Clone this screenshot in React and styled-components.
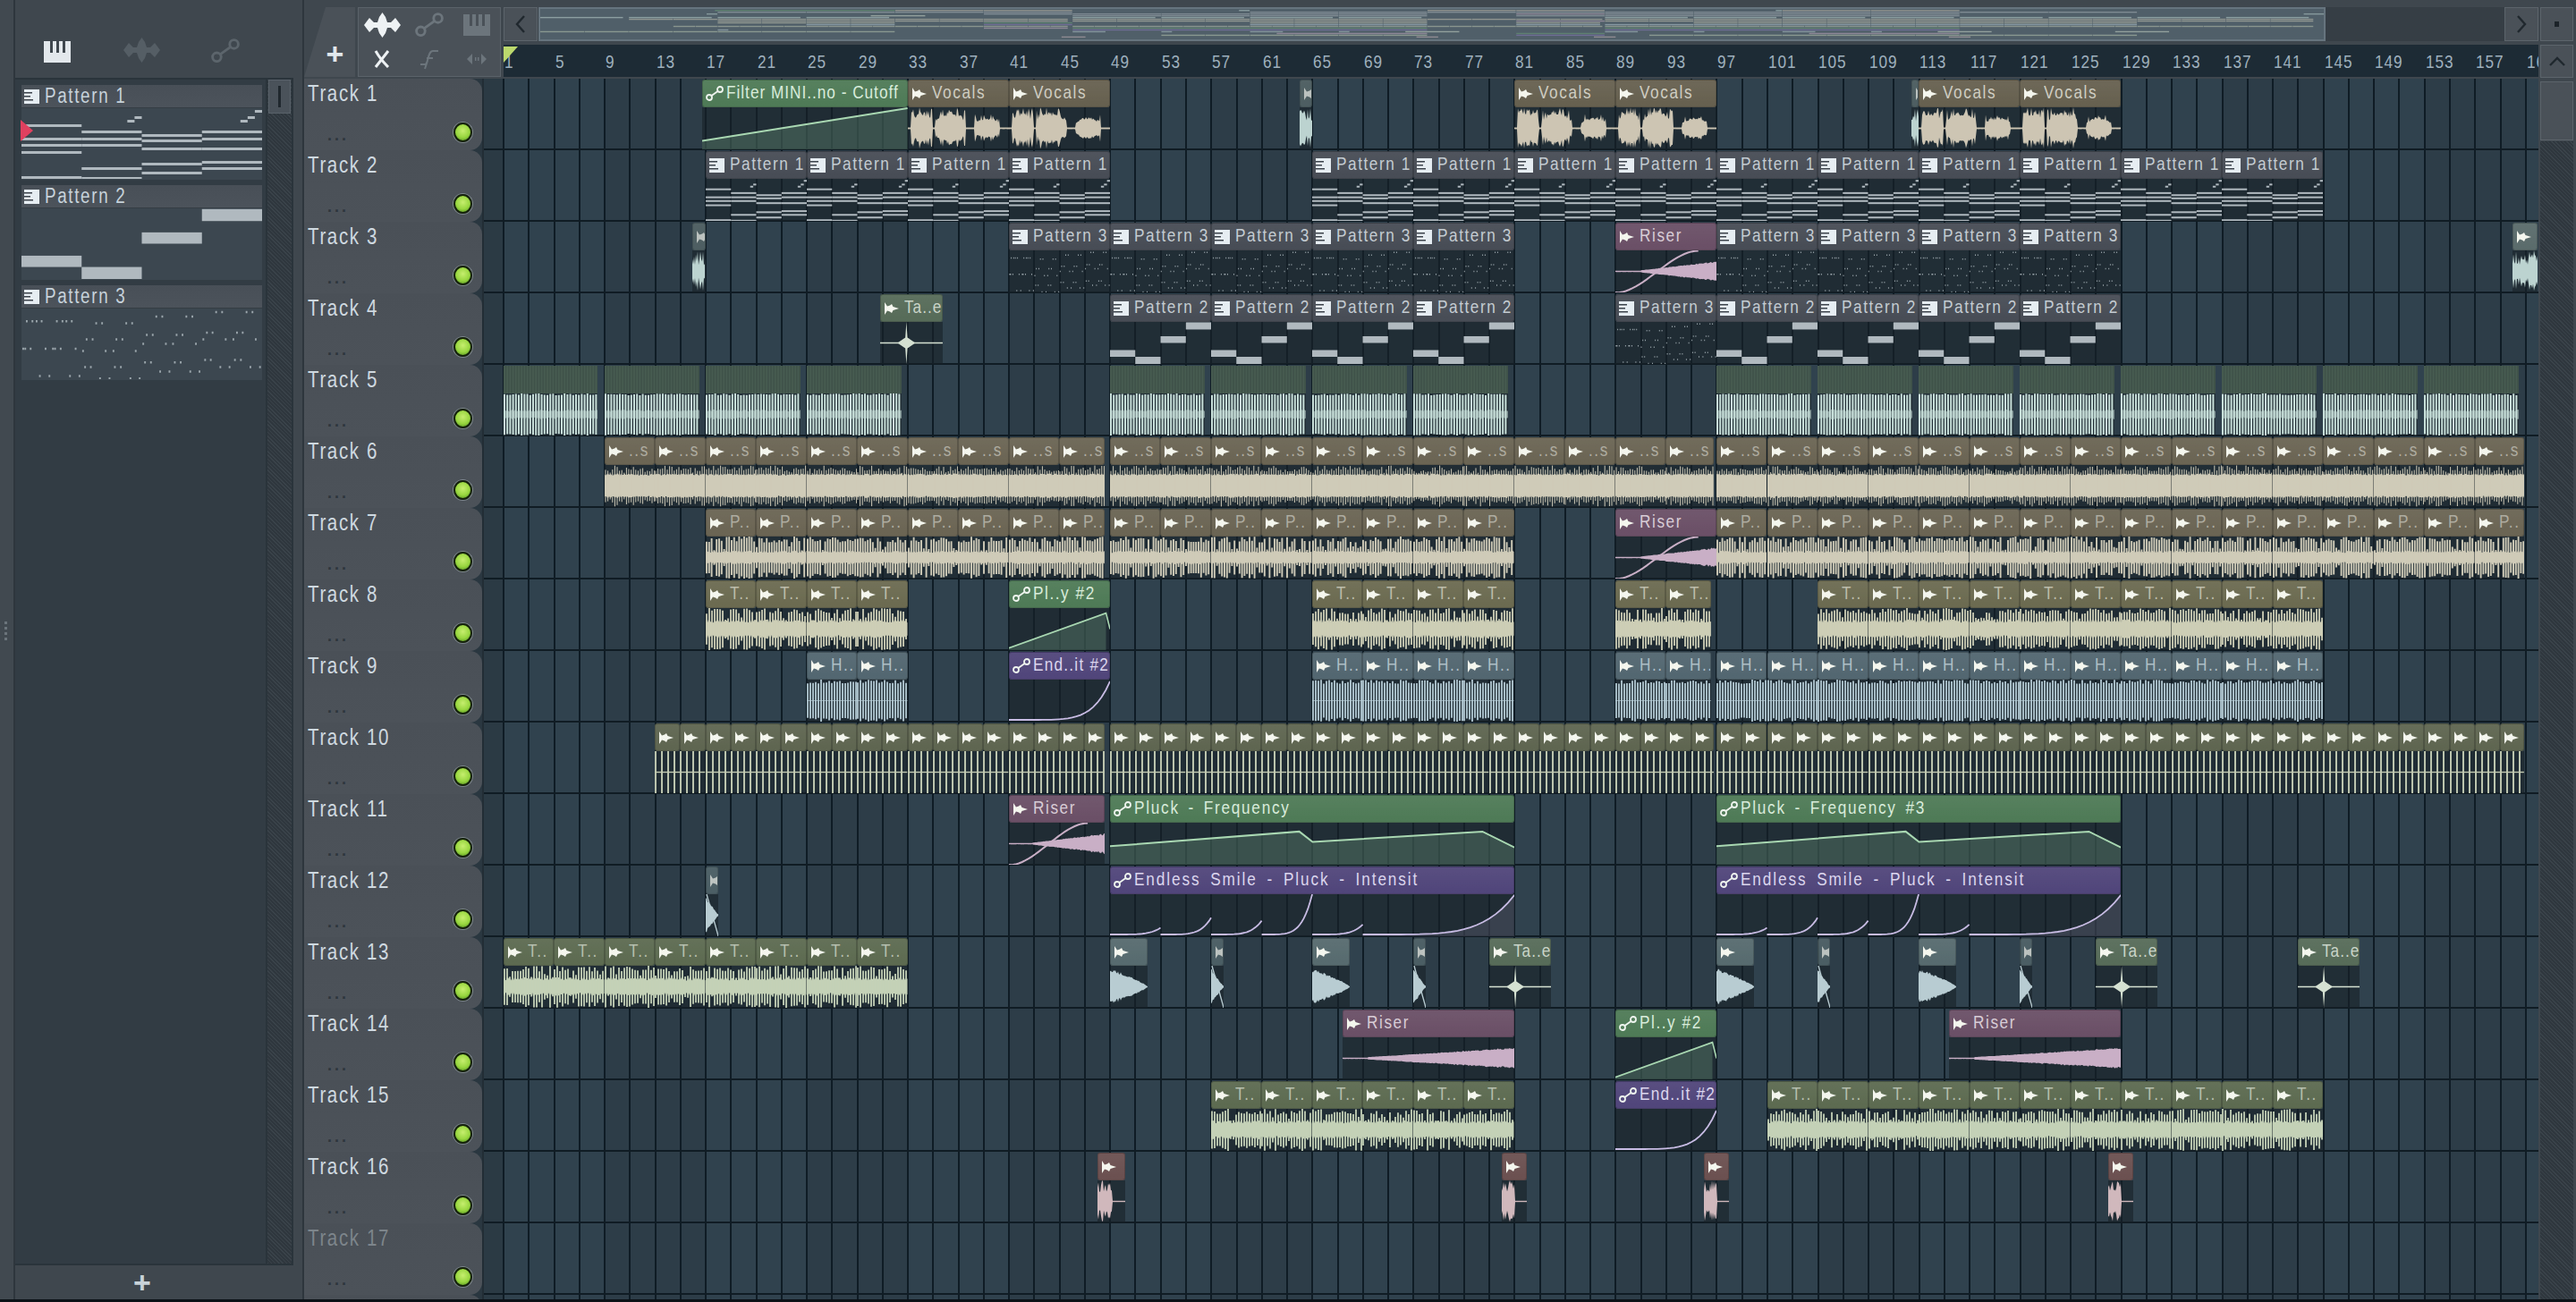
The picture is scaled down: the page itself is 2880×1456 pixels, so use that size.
import React from "react";
import styled, { createGlobalStyle } from "styled-components";

const BAR = 14.13;
const GRID_X = 21.5;
const FONT = `"Liberation Sans",Arial,sans-serif`;

const Global = createGlobalStyle`
  html,body{margin:0;padding:0;background:#0b1116;}
  #root{width:2880px;height:1456px;overflow:hidden;}
  *{box-sizing:border-box;}
`;

/* ---------- helpers for the wave drawings ---------- */
function rng(seed) {
  let a = seed * 2654435761 >>> 0;
  return () => {
    a |= 0; a = (a + 0x6d2b79f5) | 0;
    let t = Math.imul(a ^ (a >>> 15), 1 | a);
    t = (t + Math.imul(t ^ (t >>> 7), 61 | t)) ^ t;
    return ((t ^ (t >>> 14)) >>> 0) / 4294967296;
  };
}
const n = (v) => Math.round(v * 10) / 10;
function mirror(w, h, amp, seed, step = 1) {
  const r = rng(seed), c = h / 2, top = [], bot = [];
  const count = Math.ceil(w / step);
  for (let i = 0; i <= count; i++) {
    const x = Math.min(w, i * step);
    const a = Math.min(1, amp(x / w, r)) * c;
    const b = a * (0.9 + r() * 0.1);
    top.push(`${n(x)} ${n(c - a)}`);
    bot.unshift(`${n(x)} ${n(c + b)}`);
  }
  return `M${top.join("L")}L${bot.join("L")}Z`;
}
function comb(w, h, pitch, amp, seed) {
  const r = rng(seed), c = h / 2;
  let d = "";
  for (let x = 1; x < w; x += pitch) {
    const a = Math.min(1, amp(x / w, r)) * c;
    d += `M${n(x)} ${n(c - a)}V${n(c + a)}`;
  }
  return d;
}

const NOTES1 = [
  [0, .25, 139], [0, .25, 154], [0, .25, 161], [0, .25, 169], [0, .25, 197],
  [.25, .5, 146], [.25, .5, 154], [.25, .5, 161], [.25, .5, 187], [.25, .5, 198],
  [.44, .47, 134], [.47, .5, 130],
  [.5, .75, 150], [.5, .75, 156], [.5, .75, 165], [.5, .75, 182], [.5, .75, 192],
  [.75, 1, 146], [.75, 1, 154], [.75, 1, 165], [.75, 1, 180], [.75, 1, 187],
  [.91, .94, 134], [.94, .97, 130], [.97, 1, 123],
];
const NOTES2 = [[0, .25, .67, .83], [.25, .5, .83, 1], [.5, .75, .34, .5], [.75, 1, .01, .18]];
const DOT_ROWS = [
  [143, 723, 743, 825, 845], [158, 522, 542, 623, 643], [174, 87, 106, 120, 137, 188, 207, 220, 238],
  [181, 320, 340, 421, 441], [212, 692, 711, 793, 812], [220, 490, 510, 590, 610],
  [235, 288, 308, 388, 408, 680, 755, 781, 856], [250, 478, 554, 578, 655],
  [266, 75, 82, 100, 150, 175, 182, 201, 251], [274, 276, 352, 378, 453], [304, 686, 705, 786, 806],
  [312, 484, 504, 584, 604], [328, 283, 302, 383, 403, 737, 768, 838, 870], [343, 535, 566, 636, 667],
  [358, 131, 163, 232, 264], [366, 333, 365, 435, 466],
];

function PatternDrawing({ which, w, h, bar = 2 }) {
  let els = null;
  if (which === 1) {
    els = NOTES1.map(([a, b, y], i) => (
      <rect key={i} x={a * w} y={((y - 121) / 79) * h} width={(b - a) * w} height={bar} fill="#b0b9bf" />
    ));
  } else if (which === 2) {
    els = NOTES2.map(([a, b, y0, y1], i) => (
      <rect key={i} x={a * w} y={y0 * h} width={(b - a) * w} height={(y1 - y0) * h} fill="#b0b9bf" />
    ));
  } else {
    let d = "";
    const dw = Math.max(1, w / 140), dh = Math.max(1, h / 32);
    DOT_ROWS.forEach(([y, ...xs]) => xs.forEach((x) => {
      d += `M${n(((x - 72) / 808) * w)} ${n(((y - 135) / 237) * h)}h${n(dw)}v${n(dh)}h-${n(dw)}z`;
    }));
    els = <path d={d} fill="#9aa5ab" />;
  }
  return <Drawing width={w} height={h}>{els}</Drawing>;
}

function BandComb({ w, h, color, seed, pitch, low, spread, top, sw, chance = 0.8 }) {
  return (
    <Drawing width={w} height={h}>
      <path d={mirror(w, h, (t, r) => low + r() * spread, seed)} fill={color} />
      <path
        d={comb(w, h, pitch, (t, r) => (r() < chance ? top - r() * 0.28 : low + 0.12 + r() * 0.2), seed + 3)}
        stroke={color} strokeWidth={sw} fill="none"
      />
    </Drawing>
  );
}

function WaveDrawing({ kind, w, h, color, line, fill, seed }) {
  const c = h / 2;
  const cl = <path d={`M0 ${c}H${w}`} stroke={color} strokeWidth="1.4" fill="none" />;
  switch (kind) {
    case "vocal": {
      const blobs = [[.03, .24, 1, .75], [.27, .57, 1, .45], [.66, .91, .68, .25]];
      const amp = (t, r) => {
        for (const [a, b, m, sp] of blobs) if (t >= a && t <= b) {
          const p = (t - a) / (b - a);
          const body = m * (0.5 + 0.4 * Math.sin(p * Math.PI));
          return r() < sp ? m * (0.6 + r() * 0.4) : body * (0.65 + r() * 0.25);
        }
        return 0.03;
      };
      return <Drawing width={w} height={h}><path d={mirror(w, h, amp, seed)} fill={color} />{cl}</Drawing>;
    }
    case "dense":
      return <BandComb w={w} h={h} color={color} seed={seed} pitch={2.6} low={0.5} spread={0.1} top={0.98} sw={1} chance={0.7} />;
    case "busy":
      return <BandComb w={w} h={h} color={color} seed={seed} pitch={3} low={0.3} spread={0.16} top={1} sw={1.8} />;
    case "striped":
      return <BandComb w={w} h={h} color={color} seed={seed} pitch={2.8} low={0.22} spread={0.12} top={1} sw={1.9} chance={0.85} />;
    case "comb":
      return (
        <Drawing width={w} height={h}>
          <path d={comb(w, h, 3.2, (t, r) => 0.92 + r() * 0.08, seed)} stroke={color} strokeWidth="2" fill="none" />
          <path d={mirror(w, h, (t, r) => 0.14 + r() * 0.1, seed + 1)} fill={color} opacity={0.55} />
        </Drawing>
      );
    case "hat":
      return (
        <Drawing width={w} height={h}>
          <path d={comb(w, h, 3, (t, r) => 0.8 + r() * 0.2, seed)} stroke={color} strokeWidth="1.7" fill="none" />
          <path d={`M0 ${c}H${w}`} stroke={color} strokeWidth="1" opacity={0.6} fill="none" />
        </Drawing>
      );
    case "kick":
      return (
        <Drawing width={w} height={h}>
          <path d={comb(w, h, 7, () => 1, seed)} stroke={color} strokeWidth="1.9" fill="none" />
          {cl}
        </Drawing>
      );
    case "rise":
      return (
        <Drawing width={w} height={h}>
          <path d={mirror(w, h, (t, r) => (t < 0.15 ? 0.03 : 0.06 + 0.44 * ((t - 0.15) / 0.85) * (0.86 + r() * 0.18)), seed)} fill={color} />
        </Drawing>
      );
    case "riserS": {
      let s = `M0 ${h}`;
      for (let i = 1; i <= 24; i++) {
        const t = i / 24, e = t * t * (3 - 2 * t);
        s += `L${n(t * w * 0.82)} ${n(h - e * h + 0.5)}`;
      }
      return (
        <Drawing width={w} height={h}>
          <path d={mirror(w, h, (t, r) => (t < 0.25 ? 0.03 : 0.05 + 0.42 * ((t - 0.25) / 0.75) * (0.85 + r() * 0.2)), seed)} fill={color} />
          <path d={s} stroke={color} strokeWidth="2" fill="none" />
        </Drawing>
      );
    }
    case "star": {
      const x = w * 0.42;
      return (
        <Drawing width={w} height={h}>
          {cl}
          <path d={`M${x} 0L${x + 1.2} ${c - 6}L${x + 10} ${c}L${x + 1.2} ${c + 6}L${x} ${h}L${x - 1.2} ${c + 6}L${x - 10} ${c}L${x - 1.2} ${c - 6}Z`} fill={color} />
        </Drawing>
      );
    }
    case "impact":
      return (
        <Drawing width={w} height={h}>
          <path d={mirror(w, h, (t, r) => Math.max(0.02, Math.pow(1 - t, 0.8) * (0.72 + r() * 0.18) * Math.min(1, 0.85 + t * 3)), seed)} fill={color} />
        </Drawing>
      );
    case "tiny":
      return (
        <Drawing width={w} height={h}>
          <path d={mirror(w, h, (t, r) => Math.max(0.05, (1 - t) * 0.9 * (0.8 + r() * 0.2)), seed)} fill={color} />
          <path d={`M1 0L${w} ${h}`} stroke={color} strokeWidth="1.4" fill="none" />
        </Drawing>
      );
    case "short":
      return (
        <Drawing width={w} height={h}>
          <path d={mirror(w, h, (t, r) => (t < 0.52 ? 0.45 + r() * 0.55 : 0.02), seed)} fill={color} />
          <path d={`M${w / 2} ${c}H${w}`} stroke={color} strokeWidth="1.4" fill="none" />
        </Drawing>
      );
    case "chunk":
      return <Drawing width={w} height={h}><path d={mirror(w, h, (t, r) => 0.3 + r() * 0.7, seed)} fill={color} /></Drawing>;
    case "ramp":
      return (
        <Drawing width={w} height={h}>
          <path d={`M0 ${h * 0.8}L${w} 1V${h}H0Z`} fill={fill} />
          <path d={`M0 ${h * 0.8}L${w} 1`} stroke={line} strokeWidth="2" fill="none" />
        </Drawing>
      );
    case "shortRamp":
      return (
        <Drawing width={w} height={h}>
          <path d={`M0 ${h * 0.95}L${w * 0.96} ${h * 0.12}V${h}H0Z`} fill={fill} />
          <path d={`M0 ${h * 0.95}L${w * 0.96} ${h * 0.12}L${w} ${h * 0.5}`} stroke={line} strokeWidth="1.6" fill="none" />
        </Drawing>
      );
    case "freq": {
      const p = [[0, .56], [.468, .21], [.501, .46], [.921, .21], [1, .59]].map(([a, b]) => `${n(a * w)} ${n(b * h)}`).join("L");
      return (
        <Drawing width={w} height={h}>
          <path d={`M${p}V${h}H0Z`} fill={fill} />
          <path d={`M${p}`} stroke={line} strokeWidth="2" fill="none" />
        </Drawing>
      );
    }
    case "smile": {
      const segs = [[0, .125, .8], [.125, .25, .56], [.25, .375, .63], [.375, .5, 0], [.5, .625, .72], [.625, 1, .02]];
      let d = "";
      let area = "";
      segs.forEach(([a, b, pk], si) => {
        let s = "";
        for (let i = 0; i <= 24; i++) {
          const t = i / 24;
          const e = Math.pow(t, 5);
          s += `${i ? "L" : "M"}${n((a + (b - a) * t) * w)} ${n(h - 2 - (h - 2 - pk * h) * e)}`;
        }
        d += s;
        if (si === 5) area = `${s}V${h}H${n(a * w)}Z`;
      });
      return (
        <Drawing width={w} height={h}>
          <path d={area} fill={fill} />
          <path d={d} stroke={line} strokeWidth="1.8" fill="none" />
        </Drawing>
      );
    }
    case "endit": {
      let s = "";
      for (let i = 0; i <= 24; i++) {
        const t = i / 24;
        s += `${i ? "L" : "M"}${n(t * w)} ${n(h - 2 - (h - 4) * Math.pow(t, 6))}`;
      }
      return <Drawing width={w} height={h}><path d={s} stroke={line} strokeWidth="1.8" fill="none" /></Drawing>;
    }
    default:
      return null;
  }
}

/* ---------- small icons ---------- */
const SampleIcon = () => (
  <IconSvg width="17" height="14" viewBox="0 0 17 14">
    <path d="M1 0L4 4.5L7 3.6L9 2L10.5 5L17 7L10.5 9L9 12L7 10.4L4 9.5L1 14Z" fill="#f4f6ee" />
  </IconSvg>
);
const PatternIcon = () => (
  <IconSvg width="17" height="16" viewBox="0 0 17 16">
    <rect width="17" height="16" fill="#e6edf2" />
    <path d="M0 3h9v1.6H0zM0 7h7v1.6H0zM0 11h10v1.6H0z" fill="#3b424a" />
  </IconSvg>
);
const AutoIcon = ({ color = "#eef4ee", s = 20 }) => (
  <IconSvg width={s} height={s * 0.85} viewBox="0 0 20 17">
    <circle cx="4" cy="13" r="3" stroke={color} strokeWidth="1.8" fill="none" />
    <circle cx="16" cy="4" r="3" stroke={color} strokeWidth="1.8" fill="none" />
    <path d="M6.5 11L13.5 6" stroke={color} strokeWidth="1.8" />
  </IconSvg>
);
const PianoIcon = ({ color, dark = "#3f474e" }) => (
  <svg width="30" height="24" viewBox="0 0 30 24">
    <rect width="30" height="24" fill={color} />
    <path d="M7 0h3v13H7zM14 0h3v13h-3zM21 0h3v13h-3z" fill={dark} />
  </svg>
);
const WaveIcon = ({ color }) => (
  <svg width="41" height="28" viewBox="0 0 41 28">
    <path d="M0 14L6 6L11 11L15 11L17 5L20.5 0L24 5L26 11L30 11L35 6L41 14L35 22L30 17L26 17L24 23L20.5 28L17 23L15 17L11 17L6 22Z" fill={color} />
  </svg>
);

/* ---------- clip data ---------- */
const CL = {
  auto: { head: "#4e7a56", line: "#a9d8b2", fill: "rgba(120,170,135,.3)", text: "#d9ecdb", color: "#6ea37a" },
  purple: { head: "#50457a", line: "#c8bce4", fill: "rgba(170,160,200,.18)", text: "#dcd6ee", color: "#8d7cc4" },
  vocal: { head: "#66604f", color: "#cdc5b3", text: "#cfcdc2" },
  pat: { head: "#474c55", color: "#aeb7bd", text: "#c4ccd2" },
  riser: { head: "#6a4f66", color: "#c9afc6", text: "#d8ccd6" },
  teal: { head: "#526670", color: "#bdd4de", text: "#aebec5" },
  olive: { head: "#6a6453", color: "#cfcbb8", text: "#aeaca0" },
  t8: { head: "#6b6a50", color: "#cdceb6", text: "#bdbdab" },
  t10: { head: "#5e6550", color: "#c4ccb4", text: "#c8cfb8" },
  t13: { head: "#5c6a50", color: "#c4d1b7", text: "#b6bfae" },
  tae: { head: "#566b58", color: "#d5e1d2", text: "#c9d4c8" },
  imp: { head: "#566a6e", color: "#b8ccd2", text: "#c4d0d4" },
  mini: { head: "#5a6b6b", color: "#bcd3d0", text: "#c4d0d4" },
  rust: { head: "#6b5050", color: "#d0b8bc", text: "#c9b8b8" },
  t5: { head: "#3f5249", color: "#c8e0da", text: "#b3d1ca" },
};

const seq = (a, b, step, o) => {
  const out = [];
  for (let x = a; x < b - 0.01; x += step) out.push({ a: x, b: Math.min(b, x + step), ...o });
  return out;
};
const P1 = { icon: "p", pat: 1, name: "Pattern 1", c: "pat" };
const P2 = { icon: "p", pat: 2, name: "Pattern 2", c: "pat" };
const P3 = { icon: "p", pat: 3, name: "Pattern 3", c: "pat" };
const V = { icon: "s", name: "Vocals", c: "vocal", kind: "vocal" };
const R1 = { icon: "s", name: "Riser", c: "riser", kind: "riserS" };
const R2 = { icon: "s", name: "Riser", c: "riser", kind: "rise" };
const TAE = { icon: "s", name: "Ta..e", c: "tae", kind: "star", ls: 1.2 };
const IMP = { icon: "s", name: "", c: "imp", kind: "impact" };
const TIN = { icon: "s", name: "", c: "imp", kind: "tiny", faint: true };
const PLY = { icon: "a", name: "Pl..y #2", c: "auto", kind: "shortRamp" };
const END = { icon: "a", name: "End..it #2", c: "purple", kind: "endit", ls: 1.5 };

const S6 = { icon: "s", name: "..s", c: "olive", kind: "dense" };
const S7 = { icon: "s", name: "P..", c: "olive", kind: "striped" };
const S8 = { icon: "s", name: "T..", c: "t8", kind: "busy" };
const S9 = { icon: "s", name: "H..", c: "teal", kind: "hat" };
const S10 = { icon: "s", name: "", c: "t10", kind: "kick" };
const S13 = { icon: "s", name: "T..", c: "t13", kind: "busy" };
const S15 = { icon: "s", name: "T..", c: "t13", kind: "busy" };
const S5 = { c: "t5", kind: "comb", stripes: true };
const RUST = { icon: "s", name: "", c: "rust", kind: "short" };

const TRACKS = [
  [
    { a: 16.75, b: 33, icon: "a", name: "Filter MINI..no - Cutoff", c: "auto", kind: "ramp", ls: 1.2, ws: 0 },
    { a: 33, b: 41, ...V }, { a: 41, b: 49, ...V },
    { a: 64, b: 65, icon: "s", name: "", c: "mini", kind: "chunk", faint: true },
    { a: 81, b: 89, ...V }, { a: 89, b: 97, ...V },
    { a: 112.4, b: 113, icon: "s", name: "", c: "mini", kind: "chunk", faint: true },
    { a: 113, b: 121, ...V }, { a: 121, b: 129, ...V },
  ],
  [...seq(17, 49, 8, P1), ...seq(65, 145, 8, P1)],
  [
    { a: 16, b: 17, icon: "s", name: "", c: "mini", kind: "chunk", faint: true },
    ...seq(41, 81, 8, P3), { a: 89, b: 97, ...R1 }, ...seq(97, 129, 8, P3),
    { a: 160, b: 162, icon: "s", name: "", c: "mini", kind: "chunk" },
  ],
  [
    { a: 30.8, b: 35.75, ...TAE }, ...seq(49, 81, 8, P2), { a: 89, b: 97, ...P3 }, ...seq(97, 129, 8, P2),
  ],
  [...seq(1, 33, 8, S5), ...seq(49, 81, 8, S5), ...seq(97, 129, 8, S5), ...seq(129, 161, 8, S5)].map((c) => ({ ...c, b: c.b - 0.5 })),
  [...seq(9, 48.6, 4, S6), ...seq(49, 96.8, 4, S6), ...seq(97, 160.9, 4, S6)],
  [...seq(17, 48.6, 4, S7), ...seq(49, 81, 4, S7), { a: 89, b: 97, ...R1 }, ...seq(97, 160.9, 4, S7)],
  [...seq(17, 33, 4, S8), { a: 41, b: 49, ...PLY }, ...seq(65, 81, 4, S8), ...seq(89, 96.6, 4, S8), ...seq(105, 145, 4, S8)],
  [...seq(25, 33, 4, S9), { a: 41, b: 49, ...END }, ...seq(65, 81, 4, S9), ...seq(89, 96.6, 4, S9), ...seq(97, 145, 4, S9)],
  [...seq(13, 48.6, 2, S10), ...seq(49, 96.8, 2, S10), ...seq(97, 160.9, 2, S10)],
  [
    { a: 41, b: 48.6, ...R1 },
    { a: 49, b: 81, icon: "a", name: "Pluck - Frequency", c: "auto", kind: "freq", ls: 2.1, ws: 4 },
    { a: 97, b: 129, icon: "a", name: "Pluck - Frequency #3", c: "auto", kind: "freq", ls: 2.1, ws: 4 },
  ],
  [
    { a: 17, b: 18, ...TIN },
    { a: 49, b: 81, icon: "a", name: "Endless Smile - Pluck - Intensit", c: "purple", kind: "smile", ls: 2.3, ws: 5 },
    { a: 97, b: 129, icon: "a", name: "Endless Smile - Pluck - Intensit", c: "purple", kind: "smile", ls: 2.3, ws: 5 },
  ],
  [
    ...seq(1, 33, 4, S13),
    { a: 49, b: 52, ...IMP }, { a: 57, b: 58, ...TIN }, { a: 65, b: 68, ...IMP }, { a: 73, b: 74, ...TIN },
    { a: 79, b: 83.9, ...TAE },
    { a: 97, b: 100, ...IMP }, { a: 105, b: 106, ...TIN }, { a: 113, b: 116, ...IMP }, { a: 121, b: 122, ...TIN },
    { a: 127, b: 131.9, ...TAE }, { a: 143, b: 147.9, ...TAE },
  ],
  [{ a: 67.4, b: 81, ...R2 }, { a: 89, b: 97, ...PLY }, { a: 115.4, b: 129, ...R2 }],
  [...seq(57, 81, 4, S15), { a: 89, b: 97, ...END }, ...seq(101, 145, 4, S15)],
  [
    { a: 48, b: 50.2, ...RUST }, { a: 80, b: 82, ...RUST }, { a: 96, b: 98, ...RUST }, { a: 128, b: 130, ...RUST },
  ],
  [],
  [],
];

/* ---------- layout ---------- */
const Page = styled.div`
  width: 2880px; height: 1456px; display: flex; flex-direction: column;
  background: #3f474e; font-family: ${FONT}; overflow: hidden;
`;
const Work = styled.div`flex: 1; min-height: 0; display: flex;`;
const BottomEdge = styled.div`height: 3px; background: #0b1116;`;
const Rail = styled.div`
  width: 17px; display: flex; flex-direction: column; align-items: center; justify-content: center; gap: 3px;
  border-right: 2px solid #2e363d; padding-bottom: 42px; padding-right: 2px; background: #414950;
`;
const GripDot = styled.span`width: 3px; height: 3px; background: #6b747b;`;
const Squeeze = styled.span`
  display: inline-block; flex: none; transform: scaleX(0.82); transform-origin: 0 50%; white-space: nowrap;
`;
const ClipLabel = styled(Squeeze)`
  margin-bottom: 4px;
  letter-spacing: ${(p) => (p.$ls == null ? "1.9px" : `${p.$ls}px`)};
  word-spacing: ${(p) => p.$ws || 0}px;
`;
const Picker = styled.div`width: 321px; display: flex; flex-direction: column;`;
const PickerTools = styled.div`
  height: 87px; display: grid; grid-template-columns: 94px 94px 94px; align-items: end; justify-items: center;
  padding-bottom: 17px;
`;
const PickerPanel = styled.div`
  width: 311px; flex: 1; display: flex; background: #323c44; border: 2px solid #2a343b; border-left: 0;
`;
const PickerList = styled.div`flex: 1; padding: 6px 4px 0 7px; display: flex; flex-direction: column; gap: 6px;`;
const PickerItem = styled.div`display: flex; flex-direction: column; height: 106px;`;
const PickerHead = styled.div`
  height: 26px; display: flex; align-items: center; gap: 6px; padding-left: 3px; flex: none; overflow: hidden;
  background: linear-gradient(#484f57, #4c535b); border-bottom: 1px solid #353d44;
  font-size: 23px; letter-spacing: 2px; color: #c6d2da; line-height: 1;
`;
const PickerPreview = styled.div`flex: 1; background: #3c4750; display: flex;`;
const Hatch = styled.div`
  background: repeating-linear-gradient(45deg, #3a434a 0 1px, #2f373e 1px 3px);
`;
const PickerScroll = styled(Hatch)`width: 31px; border-left: 2px solid #2a343b;`;
const SmallBtn = styled.div`
  height: 38px; margin: 0 1px; background: #4a525a; border: 1px solid #59626a; display: flex; justify-content: center; align-items: center;
`;
const Bar = styled.span`width: 3px; height: 24px; background: #20282e;`;
const PickerFooter = styled.div`
  height: 38px; width: 284px; display: flex; align-items: center; justify-content: center; font-size: 34px; font-weight: 700; color: #c8d2d8;
  line-height: 1;
`;
const Marker = styled.span`
  position: absolute; left: -1px; top: 13px; width: 14px; height: 24px; background: #e0405f;
  clip-path: polygon(0 0, 100% 50%, 0 100%);
`;
const PreviewWrap = styled.div`position: relative; flex: none;`;

const Arr = styled.div`
  width: 2500px; display: flex; flex-direction: column; border-left: 2px solid #2e363d;
`;
const ArrTop = styled.div`height: 88px; display: flex; padding-top: 8px;`;
const AddTab = styled.div`
  width: 57px; height: 78px; margin-right: 3px; background: #4a5158;
  clip-path: polygon(24px 0, 100% 0, 100% 100%, 0 100%);
  display: flex; align-items: center; justify-content: center; padding: 26px 0 0 12px;
  font: 700 34px "Liberation Sans", sans-serif; color: #e2e8ec;
`;
const Tools = styled.div`
  width: 160px; height: 78px; background: #4a5158; border: 1px solid #5a6269; display: grid;
  grid-template-columns: 1fr 1fr 1fr; grid-template-rows: 1fr 1fr; align-items: center; justify-items: center; margin-right: 3px;
`;
const TimeCol = styled.div`flex: 1; display: flex; flex-direction: column; gap: 4px; min-width: 0; position: relative;`;
const OverviewBar = styled.div`height: 38px; display: flex; gap: 1px; background: #363e45;`;
const NavBtn = styled.div`
  width: 38px; flex: none; background: #4a5158; border: 1px solid #5c646b; display: flex; align-items: center; justify-content: center;
`;
const OverviewTrack = styled.div`flex: 1; min-width: 0;`;
const OverviewFill = styled.div`
  width: 1998px; height: 38px; background: #505f69; border: 2px solid #66747e; overflow: hidden;
`;
const Ruler = styled.div`
  height: 36px; background: #1d2b35; display: flex; overflow: hidden; position: relative; align-items: center;
`;
const BarLabel = styled.div`
  flex: none; width: ${BAR * 4}px; padding-left: 1px; font-size: 21px; letter-spacing: 1.2px; color: #9fb0bd; line-height: 1;
`;
const Playhead = styled.span`
  position: absolute; left: 0; top: 2px; width: 16px; height: 18px; background: #bcd96d;
  clip-path: polygon(0 0, 100% 0, 0 100%);
`;
const ArrBody = styled.div`flex: 1; min-height: 0; display: flex;`;
const Heads = styled.div`width: 201px; flex: none; background: #2a3740; border-right: 2px solid #222d35; overflow: hidden;`;
const TrackHead = styled.div`
  height: 80px; position: relative; background: linear-gradient(#4a5057, #4c5259);
  border-radius: 0 14px 14px 0; padding: 1px 0 0 4px;
  font-size: 25px; letter-spacing: 2px; line-height: 30px;
  color: ${(p) => (p.$muted ? "#7d858b" : "#cfd9e0")};
`;
const Dots = styled.span`
  position: absolute; left: 26px; bottom: 8px; font-size: 18px; font-weight: 700; letter-spacing: 3px; color: #2e363d; line-height: 1;
`;
const Led = styled.span`
  position: absolute; right: 11px; top: 49px; width: 21px; height: 22px; border-radius: 50%;
  background: radial-gradient(circle at 50% 40%, #c6ee6e 0, #98d63f 55%, #6aa82a 80%);
  border: 2px solid #16230c; box-shadow: 0 0 0 1px #7c858c;
`;
const LanesArea = styled.div`
  flex: 1; min-width: 0; position: relative; overflow: hidden; background: #2b3a44;
`;
const GridLayer = styled.div`
  position: absolute; left: ${GRID_X - 1}px; top: 0; bottom: 0; right: 0;
  background:
    repeating-linear-gradient(90deg, #0f1c25 0 2px, transparent 2px ${BAR * 2}px),
    repeating-linear-gradient(90deg, #30424e 0 ${BAR * 8}px, #2d3d48 ${BAR * 8}px ${BAR * 16}px);
`;
const Lane = styled.div`
  height: 80px; position: relative; border-bottom: 2px solid #101c24;
`;
const Clip = styled.div.attrs((p) => ({ style: { left: p.$x, width: p.$w } }))`
  position: absolute; top: 0; height: 79px; display: flex; flex-direction: column; overflow: hidden;
`;
const ClipHead = styled.div`
  height: 31px; flex: none; margin-top: 1px; display: flex; align-items: center; gap: ${(p) => (p.$auto ? 3 : 6)}px; padding-left: 3px; overflow: hidden;
  background: linear-gradient(rgba(255,255,255,.05), rgba(255,255,255,0)), ${(p) => p.$bg};
  border: 1px solid rgba(0,0,0,.18); border-radius: 3px;
  font-size: 21px; line-height: 1; color: ${(p) => p.$fg};
  opacity: ${(p) => (p.$faint ? 0.72 : 1)};
`;
const StripeHead = styled.div`height: 31px; flex: none; margin-top: 1px; background: ${(p) => p.$bg}; display: flex;`;
const ClipBody = styled.div`flex: 1; min-height: 0; background: rgba(24,34,41,.62); display: flex;`;
const Drawing = styled.svg`display: block; flex: none; overflow: hidden;`;
const IconSvg = styled.svg`display: block; flex: none;`;

function ClipView({ clip, seed }) {
  const x = GRID_X + (clip.a - 1) * BAR;
  const w = (clip.b - clip.a) * BAR;
  const p = CL[clip.c];
  const bodyH = 47;
  return (
    <Clip $x={x} $w={w}>
      {clip.stripes ? (
        <StripeHead $bg={p.head}>
          <Drawing width={w} height={31}>
            <path d={comb(w, 31, 3.2, () => 1, seed + 5)} stroke="rgba(150,190,160,.1)" strokeWidth="1.6" fill="none" />
          </Drawing>
        </StripeHead>
      ) : (
        <ClipHead $bg={p.head} $fg={p.text} $faint={clip.faint} $auto={clip.icon === "a"}>
          {clip.icon === "s" && <SampleIcon />}
          {clip.icon === "p" && <PatternIcon />}
          {clip.icon === "a" && <AutoIcon />}
          {clip.name && <ClipLabel $ls={clip.ls} $ws={clip.ws}>{clip.name}</ClipLabel>}
        </ClipHead>
      )}
      <ClipBody>
        {clip.pat ? (
          <PatternDrawing which={clip.pat} w={w} h={bodyH} bar={2} />
        ) : (
          <WaveDrawing kind={clip.kind} w={w} h={bodyH} color={p.color} line={p.line} fill={p.fill} seed={seed} />
        )}
      </ClipBody>
    </Clip>
  );
}

function Overview() {
  const S = 12.4;
  return (
    <svg width="1994" height="34" viewBox="0 0 1994 34">
      {TRACKS.flatMap((t, ti) =>
        t.map((c, i) => (
          <rect
            key={`${ti}-${i}`}
            x={(c.a - 1) * S}
            y={1 + ti * 1.98}
            width={(c.b - c.a) * S - 0.5}
            height={1.4}
            fill={CL[c.c].color}
            opacity={0.5}
          />
        ))
      )}
    </svg>
  );
}

const bars = [];
for (let b = 1; b <= 161; b += 4) bars.push(b);

export default function App() {
  let seed = 11;
  return (
    <Page>
      <Global />
      <Work>
        <Rail><GripDot /><GripDot /><GripDot /><GripDot /></Rail>
        <Picker>
          <PickerTools>
            <PianoIcon color="#e3e8ec" />
            <WaveIcon color="#555e65" />
            <AutoIcon color="#5c656c" s={32} />
          </PickerTools>
          <PickerPanel>
            <PickerList>
              {[1, 2, 3].map((i) => (
                <PickerItem key={i}>
                  <PickerHead><PatternIcon /><Squeeze>Pattern {i}</Squeeze></PickerHead>
                  <PickerPreview>
                    <PreviewWrap>
                      <PatternDrawing which={i} w={269} h={79} bar={3} />
                      {i === 1 && <Marker />}
                    </PreviewWrap>
                  </PickerPreview>
                </PickerItem>
              ))}
            </PickerList>
            <PickerScroll><SmallBtn><Bar /></SmallBtn></PickerScroll>
          </PickerPanel>
          <PickerFooter>+</PickerFooter>
        </Picker>
        <Arr>
          <ArrTop>
            <AddTab>+</AddTab>
            <Tools>
              <WaveIcon color="#eef2f4" />
              <AutoIcon color="#6c757c" s={32} />
              <PianoIcon color="#6c757c" dark="#4a5158" />
              <svg width="20" height="20" viewBox="0 0 20 20"><path d="M3 1Q8 10 17 19M17 1Q10 10 3 19" stroke="#eef2f4" strokeWidth="3" fill="none" /></svg>
              <svg width="22" height="24" viewBox="0 0 22 24"><path d="M1 18H6C10 18 9 3 15 3H21M8 11H15M6 23L9 14" stroke="#6c757c" strokeWidth="2" fill="none" /></svg>
              <svg width="22" height="14" viewBox="0 0 22 14"><path d="M0 7L6 1V13ZM22 7L16 1V13Z" fill="#6c757c" /><path d="M9 5h1.5v4H9zM12 5h1.5v4H12z" fill="#6c757c" /></svg>
            </Tools>
            <TimeCol>
              <OverviewBar>
                <NavBtn><svg width="14" height="22" viewBox="0 0 14 22"><path d="M11 2L3 11L11 20" stroke="#20282e" strokeWidth="2.4" fill="none" /></svg></NavBtn>
                <OverviewTrack><OverviewFill><Overview /></OverviewFill></OverviewTrack>
                <NavBtn><svg width="14" height="22" viewBox="0 0 14 22"><path d="M3 2L11 11L3 20" stroke="#20282e" strokeWidth="2.4" fill="none" /></svg></NavBtn>
              </OverviewBar>
              <Ruler>
                {bars.map((b) => <BarLabel key={b}><Squeeze>{b}</Squeeze></BarLabel>)}
                <Playhead />
              </Ruler>
            </TimeCol>
          </ArrTop>
          <ArrBody>
            <Heads>
              {TRACKS.map((t, i) => (
                <TrackHead key={i} $muted={i === 16}>
                  {i < 17 && <Squeeze>Track {i + 1}</Squeeze>}
                  <Dots>...</Dots>
                  <Led />
                </TrackHead>
              ))}
            </Heads>
            <LanesArea>
              <GridLayer />
              {TRACKS.map((t, i) => (
                <Lane key={i}>
                  {t.map((c, j) => <ClipView key={j} clip={c} seed={seed++} />)}
                </Lane>
              ))}
            </LanesArea>
          </ArrBody>
        </Arr>
        <RightCol />
      </Work>
      <BottomEdge />
    </Page>
  );
}

const ScrollCol = styled.div`width: 40px; display: flex; flex-direction: column; padding: 8px 1px 0 2px; gap: 4px;`;
const ScrollBtn = styled.div`
  height: ${(p) => p.$h}px; flex: none; background: #4a5158; border: 1px solid #5c646b; display: flex; align-items: center; justify-content: center;
`;
const ScrollRest = styled(Hatch)`flex: 1; margin-top: -3px;`;
function RightCol() {
  return (
    <ScrollCol>
      <ScrollBtn $h={38}><svg width="6" height="6"><rect width="5" height="6" fill="#1c2329" /></svg></ScrollBtn>
      <ScrollBtn $h={37}><svg width="18" height="12" viewBox="0 0 18 12"><path d="M1 10L9 2L17 10" stroke="#20282e" strokeWidth="2.4" fill="none" /></svg></ScrollBtn>
      <ScrollBtn $h={66} />
      <ScrollRest />
    </ScrollCol>
  );
}
